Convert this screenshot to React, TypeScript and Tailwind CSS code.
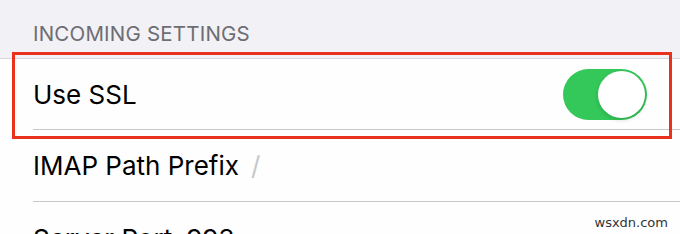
export default function App() {
  return (
    <div className="relative w-[680px] h-[234px] overflow-hidden bg-[#fefefe] font-['Inter',sans-serif]">
      <div className="h-[59px] bg-[#f2f1f6] border-b border-[#d8d7dc] flex items-end pl-[33px] pb-[14px]">
        <span className="text-[20.5px] leading-none text-[#6d6d72] tracking-[0.2px]">INCOMING SETTINGS</span>
      </div>

      <div className="pl-[33px]">
        <div className="h-[71px] flex items-center justify-between pr-[33px] border-b border-[#c8c7cc]">
          <span className="text-[26px] text-black">Use SSL</span>
          <div className="w-[84px] h-[51px] rounded-full bg-[#34c759] flex items-center justify-end pr-[2px]">
            <div className="w-[47px] h-[47px] rounded-full bg-white shadow-[0_2px_4px_rgba(0,0,0,0.15)]" />
          </div>
        </div>

        <div className="h-[72px] flex items-center border-b border-[#c8c7cc]">
          <span className="text-[26px] text-black">IMAP Path Prefix</span>
          <span className="ml-[12px] text-[26px] text-[#c7c7cc]">/</span>
        </div>

        <div className="h-[72px] flex items-center">
          <span className="text-[26px] text-black">Server Port</span>
          <span className="ml-[14px] text-[26px] text-black">993</span>
        </div>
      </div>

      <div className="absolute left-[12px] top-[52px] w-[660px] h-[87px] border-[3px] border-[#e8321e]" />

      <span className="absolute right-[12px] top-[216px] text-[13px] leading-none text-[#333] font-['DejaVu_Sans',sans-serif]">wsxdn.com</span>
    </div>
  );
}
